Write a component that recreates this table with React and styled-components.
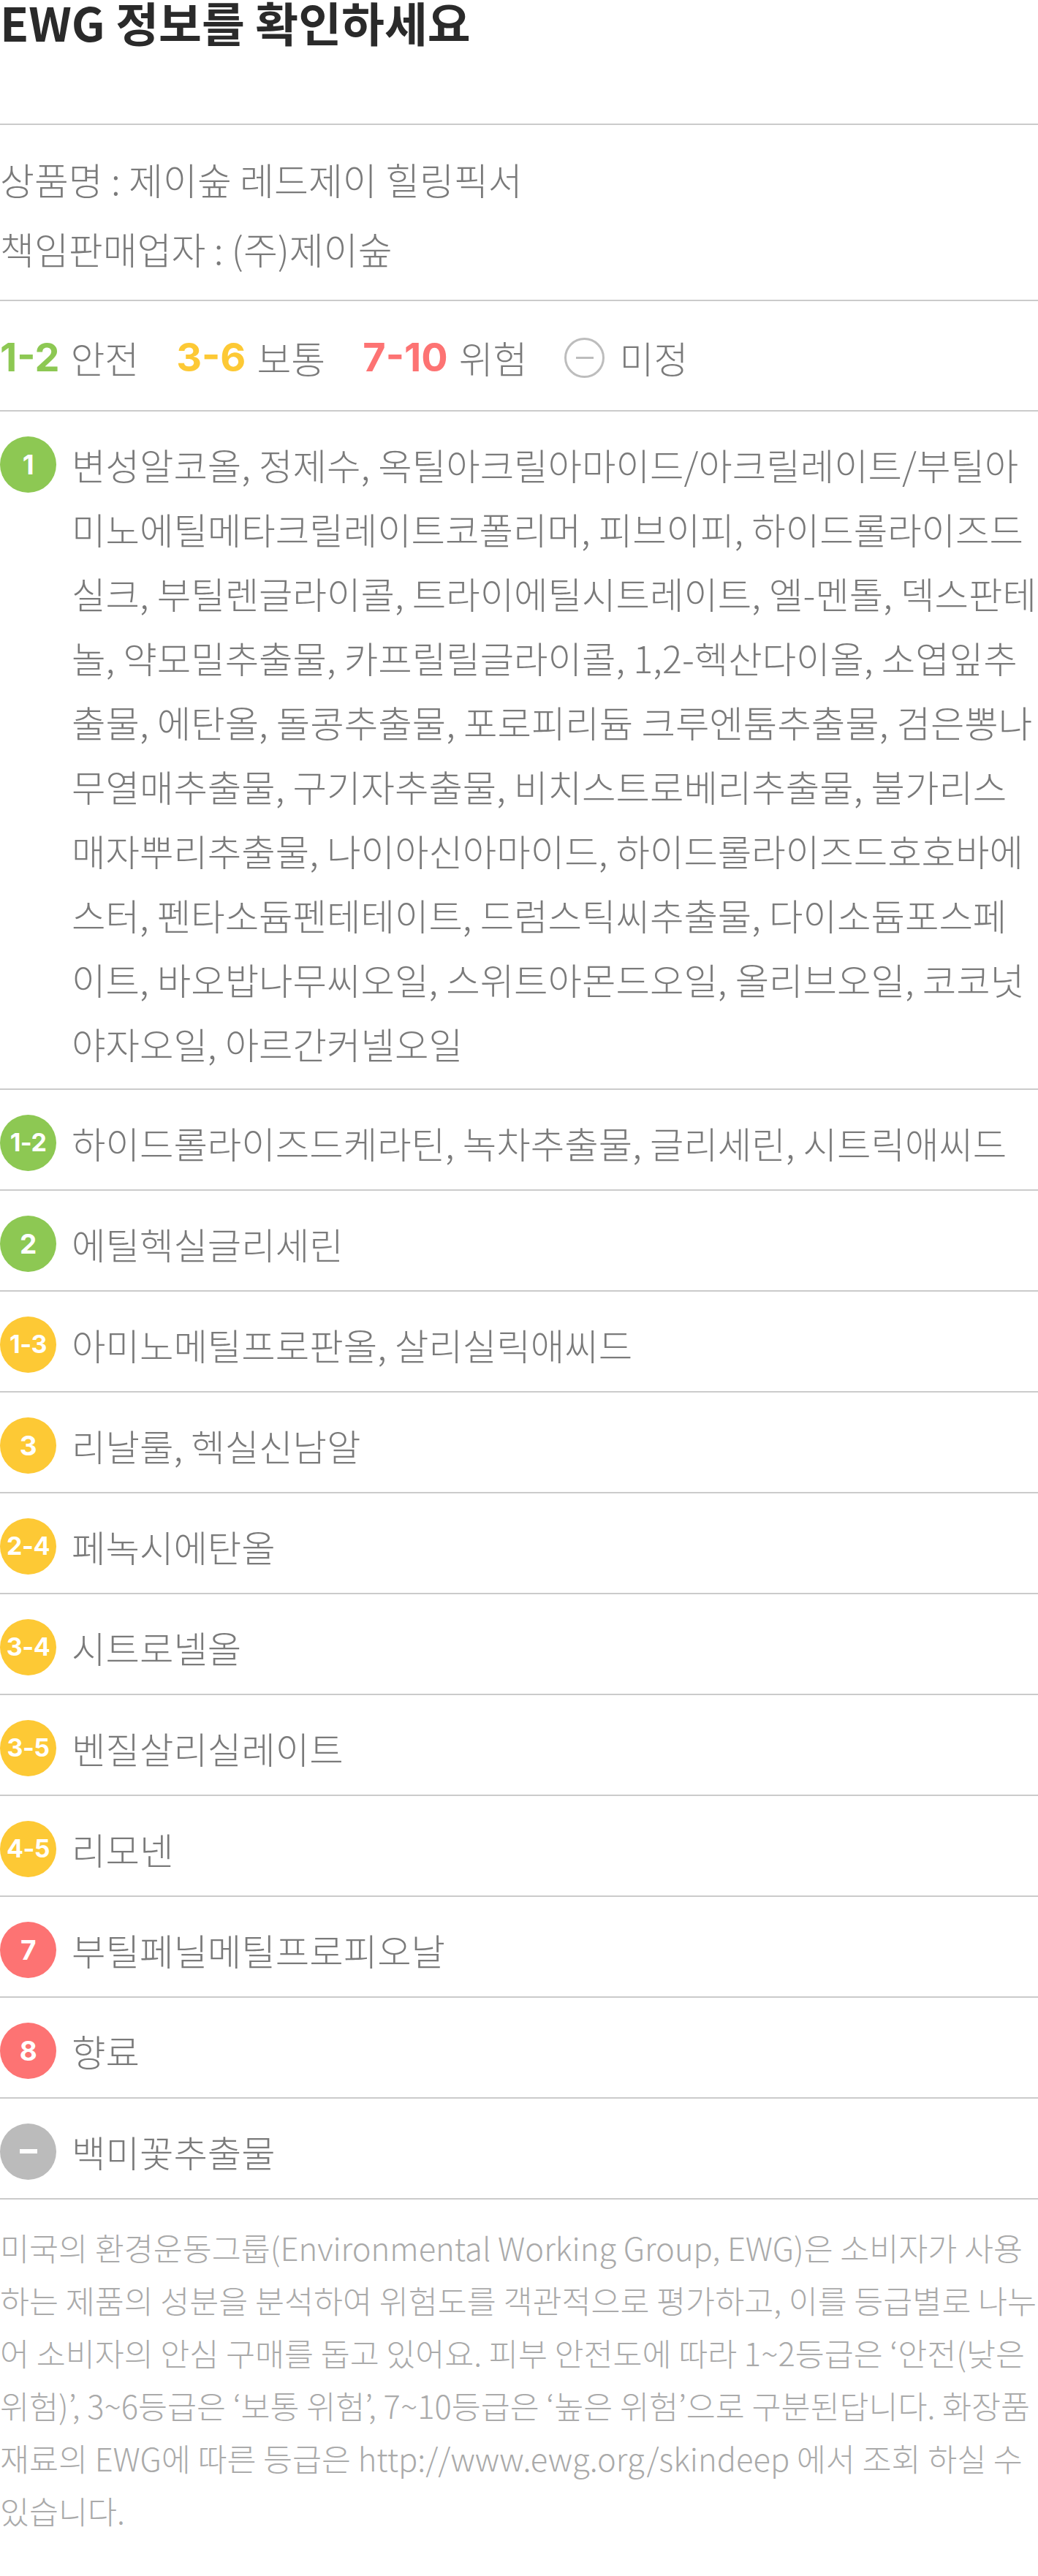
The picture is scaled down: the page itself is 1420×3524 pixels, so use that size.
import React from 'react';
import styled, { createGlobalStyle } from 'styled-components';

const GlobalStyle = createGlobalStyle`
  html, body { margin: 0; padding: 0; background: #ffffff; }
  body { font-family: "Noto Sans CJK KR", "Noto Sans", sans-serif; }
`;

const COLORS = {
  green: '#8dc853',
  yellow: '#fdc935',
  red: '#fd7373',
  gray: '#bbbbbb',
};

const Page = styled.div`
  width: 1420px;
`;

const Header = styled.header`
  height: 169px;
  border-bottom: 2px solid #cbcbcb;
`;

const Title = styled.h1`
  margin: 0;
  font-family: "Noto Sans CJK KR", sans-serif;
  font-size: 64px;
  line-height: 58px;
  font-weight: 700;
  color: #2a2a2a;
`;

const InfoSection = styled.section`
  padding: 27px 0 22px;
  border-bottom: 2px solid #cbcbcb;
`;

const InfoLine = styled.p`
  margin: 0;
  font-size: 51px;
  line-height: 95px;
  font-weight: 300;
  color: #7a7a7a;
`;

const Legend = styled.section`
  display: flex;
  align-items: center;
  gap: 51px;
  height: 98px;
  padding: 28px 0 23px;
  border-bottom: 2px solid #cbcbcb;
`;

const LegendItem = styled.div`
  display: flex;
  align-items: center;
  gap: ${(p) => (p.$icon ? '20px' : '15px')};
`;

const LegendNum = styled.span`
  font-family: "Inter", "Noto Sans", sans-serif;
  font-weight: 700;
  font-size: 54px;
  line-height: 1;
  color: ${(p) => p.$color};
`;

const LegendLabel = styled.span`
  font-size: 51px;
  font-weight: 300;
  color: #7a7a7a;
  line-height: 1;
`;

const UnknownIcon = styled.span`
  box-sizing: border-box;
  width: 55px;
  height: 55px;
  border: 3px solid #bdbdbd;
  border-radius: 50%;
  display: flex;
  align-items: center;
  justify-content: center;
  &::after {
    content: '';
    width: 24px;
    height: 3px;
    background: #bdbdbd;
  }
`;

const Row = styled.div`
  display: flex;
  align-items: flex-start;
  gap: 21px;
  padding: ${(p) => (p.$multi ? '28px 0 18px' : '28px 0 20px')};
  border-bottom: 2px solid #cbcbcb;
`;

const Badge = styled.span`
  flex: 0 0 77px;
  height: 77px;
  margin-top: 5.5px;
  border-radius: 50%;
  background: ${(p) => p.$color};
  color: #ffffff;
  display: flex;
  align-items: center;
  justify-content: center;
  font-family: "Inter", "Noto Sans", sans-serif;
  font-weight: 700;
  font-size: ${(p) => (p.$long ? '34px' : '37px')};
  letter-spacing: -0.5px;
  line-height: 1;
`;

const Dash = styled.span`
  width: 24px;
  height: 6px;
  background: #ffffff;
`;

const IngredientText = styled.p`
  flex: 1;
  min-width: 0;
  margin: 0;
  font-size: 50.5px;
  line-height: 88px;
  font-weight: 300;
  color: #7a7a7a;
  word-break: break-all;
`;

const Footer = styled.footer`
  padding: 30px 0 53px;
`;

const FooterText = styled.p`
  margin: 0;
  font-size: 43.5px;
  line-height: 72px;
  font-weight: 300;
  color: #aaaaaa;
  word-break: break-all;
`;

const rows = [
  {
    g: '1',
    c: 'green',
    t: '변성알코올, 정제수, 옥틸아크릴아마이드/아크릴레이트/부틸아미노에틸메타크릴레이트코폴리머, 피브이피, 하이드롤라이즈드실크, 부틸렌글라이콜, 트라이에틸시트레이트, 엘-멘톨, 덱스판테놀, 약모밀추출물, 카프릴릴글라이콜, 1,2-헥산다이올, 소엽잎추출물, 에탄올, 돌콩추출물, 포로피리듐 크루엔툼추출물, 검은뽕나무열매추출물, 구기자추출물, 비치스트로베리추출물, 불가리스매자뿌리추출물, 나이아신아마이드, 하이드롤라이즈드호호바에스터, 펜타소듐펜테테이트, 드럼스틱씨추출물, 다이소듐포스페이트, 바오밥나무씨오일, 스위트아몬드오일, 올리브오일, 코코넛야자오일, 아르간커넬오일',
  },
  { g: '1-2', c: 'green', t: '하이드롤라이즈드케라틴, 녹차추출물, 글리세린, 시트릭애씨드' },
  { g: '2', c: 'green', t: '에틸헥실글리세린' },
  { g: '1-3', c: 'yellow', t: '아미노메틸프로판올, 살리실릭애씨드' },
  { g: '3', c: 'yellow', t: '리날룰, 헥실신남알' },
  { g: '2-4', c: 'yellow', t: '페녹시에탄올' },
  { g: '3-4', c: 'yellow', t: '시트로넬올' },
  { g: '3-5', c: 'yellow', t: '벤질살리실레이트' },
  { g: '4-5', c: 'yellow', t: '리모넨' },
  { g: '7', c: 'red', t: '부틸페닐메틸프로피오날' },
  { g: '8', c: 'red', t: '향료' },
  { g: '-', c: 'gray', t: '백미꽃추출물' },
];

const legend = [
  { n: '1-2', c: 'green', l: '안전' },
  { n: '3-6', c: 'yellow', l: '보통' },
  { n: '7-10', c: 'red', l: '위험' },
];

export default function App() {
  return (
    <Page>
      <GlobalStyle />
      <Header>
        <Title>EWG 정보를 확인하세요</Title>
      </Header>
      <InfoSection>
        <InfoLine>상품명 : 제이숲 레드제이 힐링픽서</InfoLine>
        <InfoLine>책임판매업자 : (주)제이숲</InfoLine>
      </InfoSection>
      <Legend>
        {legend.map((it) => (
          <LegendItem key={it.n}>
            <LegendNum $color={COLORS[it.c]}>{it.n}</LegendNum>
            <LegendLabel>{it.l}</LegendLabel>
          </LegendItem>
        ))}
        <LegendItem $icon>
          <UnknownIcon />
          <LegendLabel>미정</LegendLabel>
        </LegendItem>
      </Legend>
      {rows.map((r, i) => (
        <Row key={r.g + i} $multi={i === 0}>
          <Badge $color={COLORS[r.c]} $long={r.g.length > 1}>
            {r.g === '-' ? <Dash /> : r.g}
          </Badge>
          <IngredientText>{r.t}</IngredientText>
        </Row>
      ))}
      <Footer>
        <FooterText>
          미국의 환경운동그룹(Environmental Working Group, EWG)은 소비자가 사용하는 제품의 성분을 분석하여 위험도를 객관적으로 평가하고, 이를 등급별로 나누어 소비자의 안심 구매를 돕고 있어요. 피부 안전도에 따라 1~2등급은 ‘안전(낮은 위험)’, 3~6등급은 ‘보통 위험’, 7~10등급은 ‘높은 위험’으로 구분된답니다. 화장품 재료의 EWG에 따른 등급은 http://www.ewg.org/skindeep 에서 조회 하실 수 있습니다.
        </FooterText>
      </Footer>
    </Page>
  );
}
